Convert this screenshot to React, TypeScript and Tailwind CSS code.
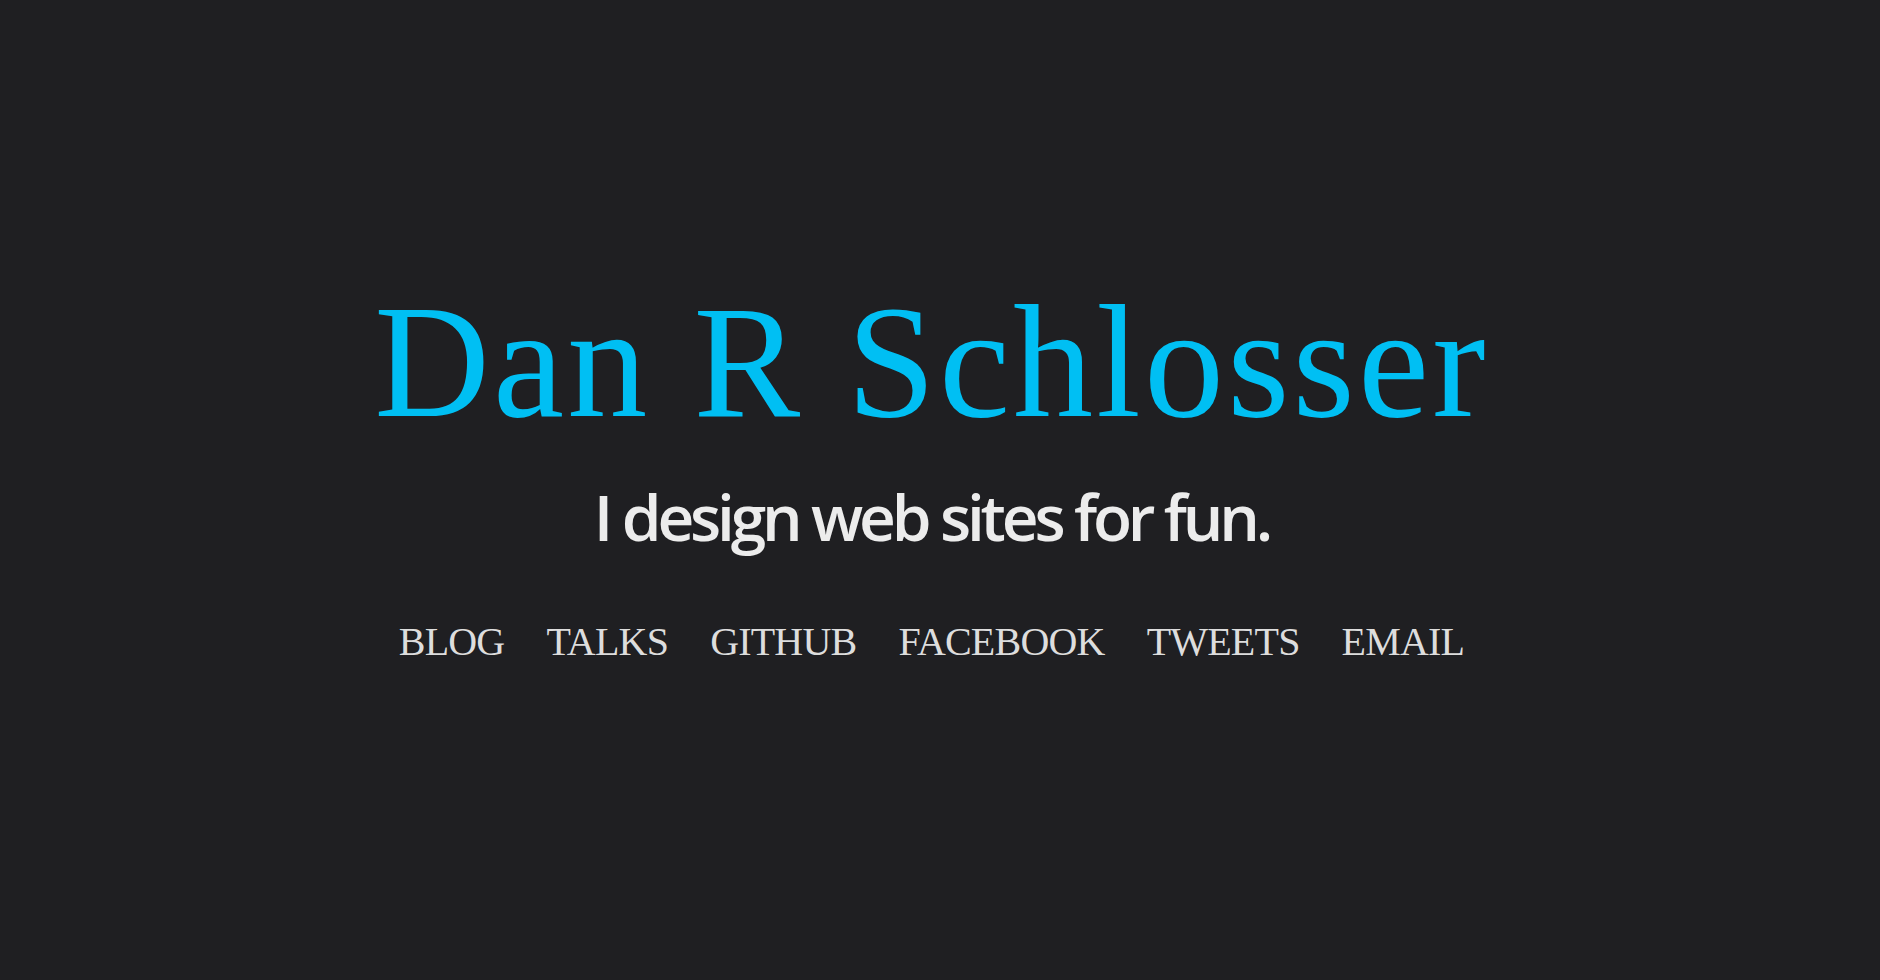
const NAV = ["BLOG", "TALKS", "GITHUB", "FACEBOOK", "TWEETS", "EMAIL"];

export default function App() {
  return (
    <main className="min-h-screen bg-[#1f1f22] flex flex-col items-center justify-center pb-[36px] pr-[17px]">
      <h1 className="font-['Liberation_Serif',serif] text-[160px] leading-none font-normal text-[#00bff3] tracking-[0.02em]">
        Dan R Schlosser
      </h1>
      <p className="mt-[43px] font-['Open_Sans',sans-serif] text-[64px] leading-none font-semibold text-[#ececec] tracking-[-0.065em]">
        I design web sites for fun.
      </p>
      <nav className="mt-[73px] flex items-center gap-[42px]">
        {NAV.map((item) => (
          <a
            key={item}
            href="#"
            className="font-['Liberation_Serif',serif] text-[40px] leading-none text-[#dddddd] tracking-[-0.02em]"
          >
            {item}
          </a>
        ))}
      </nav>
    </main>
  );
}
